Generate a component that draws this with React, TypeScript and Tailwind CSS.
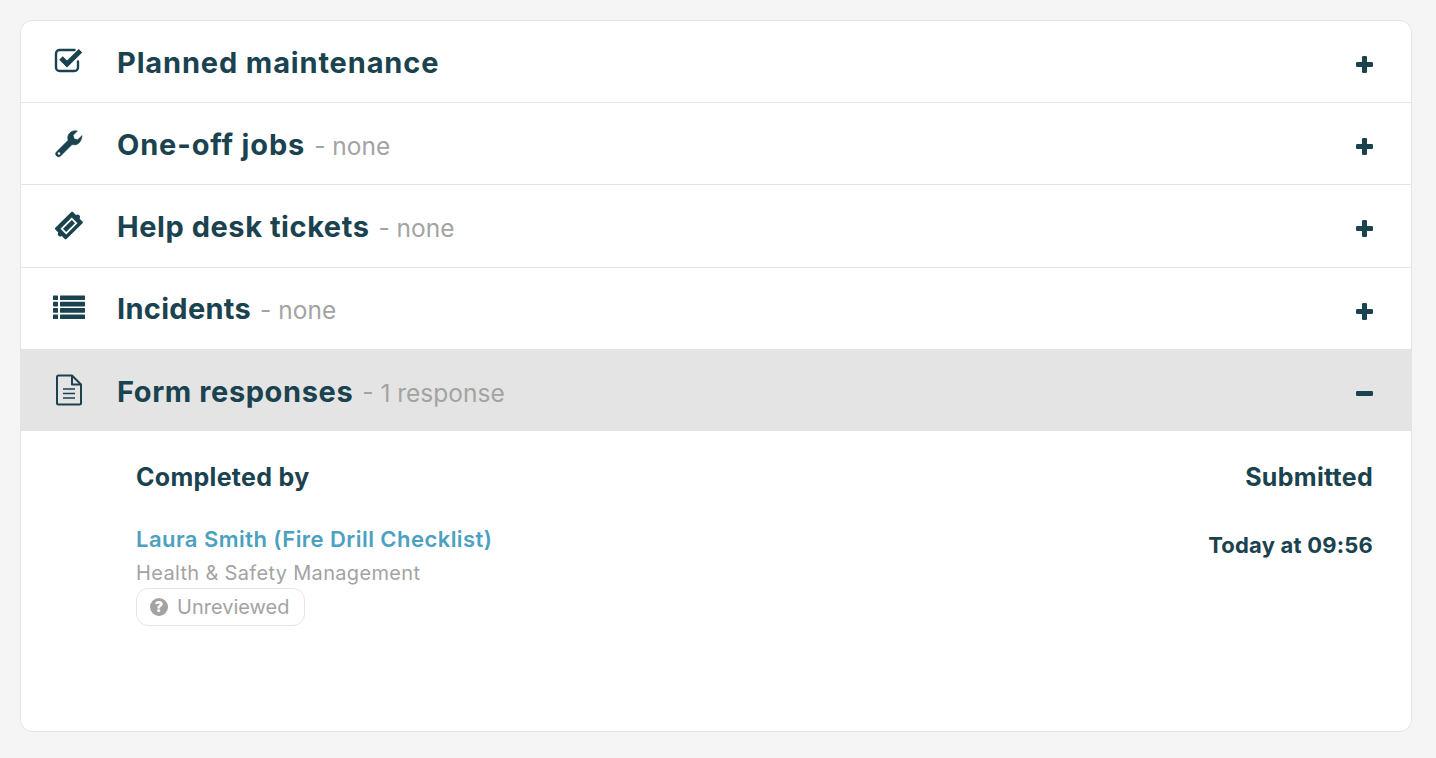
import type { ReactNode } from "react";

const CheckIcon = () => (
  <svg width="30" height="26" viewBox="0 0 30 26" fill="none" className="mb-[3px]">
    <path d="M24 14.500v6a3.500 3.500 0 0 1-3.500 3.500h-15a3.500 3.500 0 0 1-3.500-3.500v-14a3.500 3.500 0 0 1 3.500-3.500h15" stroke="currentColor" strokeWidth="2.400" strokeLinecap="round" />
    <path d="M7 11l6 6L26.500 3.800" stroke="currentColor" strokeWidth="5" />
  </svg>
);

const WrenchIcon = () => (
  <svg width="30" height="28" viewBox="0 0 30 28" fill="currentColor">
    <path d="M28 5.600l-4.300 4.200-3.600-1-1-3.500 4.300-4.200c-3-.9-6.200 0-8 2.300-1.700 2-2 4.500-1.200 6.800L2.600 21.700c-1.300 1.300-1.300 3 0 4.200 1.200 1.200 3 1.200 4.200-.1l11.300-11.300c2.300.8 4.900.3 6.900-1.500 2.100-2.100 3-5.400 3-7.400z" stroke="currentColor" strokeWidth="0.600" />
    <circle cx="5" cy="23.500" r="1.200" fill="#fff" />
  </svg>
);

const TicketIcon = () => (
  <svg width="30" height="30" viewBox="0 0 30 30" fill="currentColor">
    <path fillRule="evenodd" d="M19 1l3 3c1-.8 2.400-.7 3.300.2.900.9 1 2.300.2 3.300l3 3c.5.500.5 1.200 0 1.700L12.500 28c-.5.500-1.200.5-1.700 0l-3-3c-1 .8-2.400.7-3.300-.2-.9-.9-1-2.300-.2-3.300l-3-3c-.5-.5-.5-1.200 0-1.700L17.300 1c.5-.5 1.200-.5 1.700 0zM17.800 6.500L6.500 17.800l5.700 5.700 11.300-11.300z" />
    <path d="M17.800 9l3.200 3.200-8.800 8.800-3.200-3.200z" />
  </svg>
);

const ListIcon = () => (
  <svg width="32" height="24" viewBox="0 0 32 24" fill="currentColor" className="mb-[2px]">
    <rect x="0" y="0.500" width="5" height="4.600" rx="0.600" />
    <rect x="0" y="6.800" width="5" height="4.600" rx="0.600" />
    <rect x="0" y="13.100" width="5" height="4.600" rx="0.600" />
    <rect x="0" y="19.400" width="5" height="4.600" rx="0.600" />
    <rect x="7" y="0.500" width="25" height="4.600" rx="0.600" />
    <rect x="7" y="6.800" width="25" height="4.600" rx="0.600" />
    <rect x="7" y="13.100" width="25" height="4.600" rx="0.600" />
    <rect x="7" y="19.400" width="25" height="4.600" rx="0.600" />
  </svg>
);

const FileIcon = () => (
  <svg width="28" height="32" viewBox="0 0 28 32" fill="none" stroke="currentColor" strokeWidth="2">
    <path d="M17 1.500H3.500a1.500 1.500 0 0 0-1.500 1.500v26a1.500 1.500 0 0 0 1.500 1.500h21a1.500 1.500 0 0 0 1.500-1.500V10.500z" strokeLinejoin="round" />
    <path d="M17 1.500v9h9" strokeLinejoin="round" />
    <path d="M8 15h12M8 19.500h12M8 24h12" strokeWidth="1.600" />
  </svg>
);

const PlusIcon = () => (
  <svg width="17" height="17" viewBox="0 0 17 17" fill="currentColor" className="mt-[6px]">
    <rect x="0" y="6" width="17" height="5" rx="1.200" />
    <rect x="6" y="0" width="5" height="17" rx="1.200" />
  </svg>
);

const MinusIcon = () => (
  <svg width="17" height="5" viewBox="0 0 17 5" fill="currentColor" className="mt-[6px]">
    <rect x="0" y="0" width="17" height="5" rx="1.200" />
  </svg>
);

type SectionProps = {
  icon: ReactNode;
  title: string;
  titleClass: string;
  note?: string;
  open?: boolean;
};

function Section({ icon, title, titleClass, note, open }: SectionProps) {
  return (
    <div className={`flex items-center pr-[38px] text-[#1a424f] ${open ? "h-[81.4px] bg-[#e4e4e4]" : "h-[82.2px] border-b border-[#e5e5e5]"}`}>
      <div className="flex w-[96px] shrink-0 justify-center">{icon}</div>
      <div className="flex flex-1 items-baseline pt-[2px]">
        <span className={`text-[29px] font-bold ${titleClass}`}>{title}</span>
        {note && <span className="ml-[9px] text-[24.500px] text-[#a3a3a3]">- {note}</span>}
      </div>
      {open ? <MinusIcon /> : <PlusIcon />}
    </div>
  );
}

export default function App() {
  return (
    <div className="min-h-[758px] bg-[#f5f5f5] pb-5 pl-5 pr-6 pt-5 font-['Inter',sans-serif]">
      <div className="h-[712px] overflow-hidden rounded-xl border border-[#e3e3e3] bg-white">
        <Section icon={<CheckIcon />} title="Planned maintenance" titleClass="tracking-[0.85px]" />
        <Section icon={<WrenchIcon />} title="One-off jobs" titleClass="tracking-[0.85px]" note="none" />
        <Section icon={<TicketIcon />} title="Help desk tickets" titleClass="tracking-[0.55px]" note="none" />
        <Section icon={<ListIcon />} title="Incidents" titleClass="tracking-[0.3px]" note="none" />
        <Section icon={<FileIcon />} title="Form responses" titleClass="tracking-[0.6px]" note="1 response" open />
        <div className="pl-[115px] pr-[38px] pt-[28px]">
          <div className="flex justify-between text-[25px] font-bold leading-[36px] tracking-[0.3px] text-[#1a424f]">
            <span>Completed by</span>
            <span>Submitted</span>
          </div>
          <div className="mt-[26px] flex justify-between">
            <div>
              <a className="block text-[22px] font-semibold leading-[36px] tracking-[0.45px] text-[#4ba1bf]">Laura Smith (Fire Drill Checklist)</a>
              <div className="mt-[1px] text-[20px] leading-[30px] tracking-[0.33px] text-[#a3a3a3]">Health &amp; Safety Management</div>
              <div className="flex h-[38px] w-[169px] items-center gap-[9px] rounded-xl border border-[#e5e5e5] pb-[1px] pl-[13px] text-[20px] text-[#a3a3a3]">
                <svg width="18" height="18" viewBox="0 0 18 18" fill="currentColor">
                  <circle cx="9" cy="9" r="9" />
                  <text x="9" y="14" textAnchor="middle" fontSize="14" fontWeight="900" fill="#fff">?</text>
                </svg>
                Unreviewed
              </div>
            </div>
            <div className="pt-[6px] text-[22px] font-bold leading-[36px] tracking-[0.2px] text-[#1a424f]">Today at 09:56</div>
          </div>
        </div>
      </div>
    </div>
  );
}
